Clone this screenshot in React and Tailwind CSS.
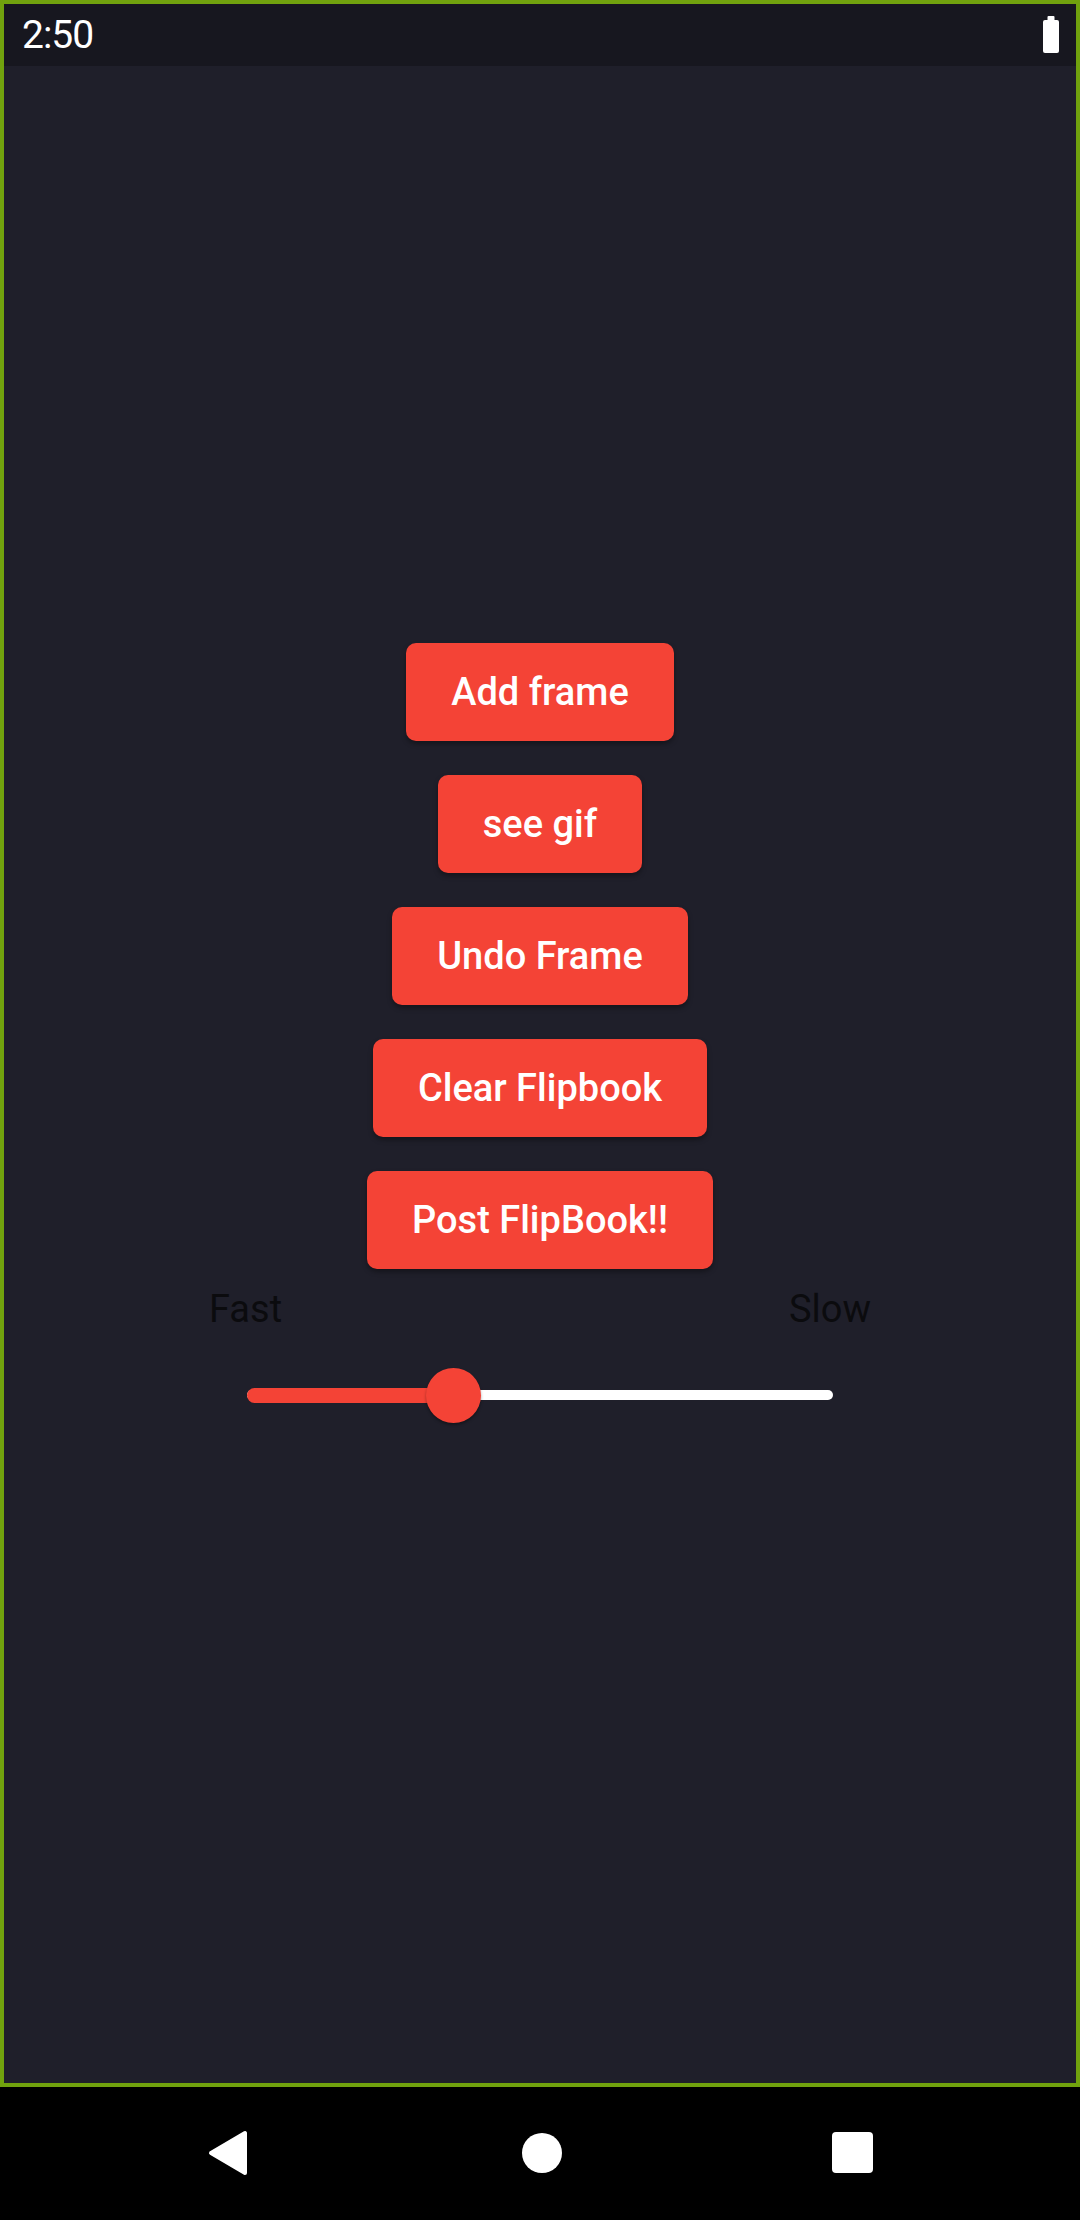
import React, { useState } from "react";

const BUTTONS = ["Add frame", "see gif", "Undo Frame", "Clear Flipbook", "Post FlipBook!!"];

export default function App() {
  const [speed] = useState(0.353);

  return (
    <div
      className="w-[1080px] h-[2220px] bg-black flex flex-col overflow-hidden"
      style={{ fontFamily: "Roboto, 'Noto Sans', sans-serif" }}
    >
      {/* --- APP FRAME --- */}
      <div className="h-[2087px] border-4 border-[#71a20e] bg-[#1f1f2a] flex flex-col">
        {/* Status bar */}
        <div className="h-[62px] bg-[#17171f] flex items-center justify-between pl-[18px] pr-[17px]">
          <span className="text-[39px] leading-none text-white tracking-[-1px]">2:50</span>
          <svg width="16" height="37" viewBox="0 0 16 37" className="mb-[1px]">
            <rect x="4.5" y="0" width="7" height="5" rx="1" fill="#fff" />
            <rect x="0" y="4" width="16" height="33" rx="2" fill="#fff" />
          </svg>
        </div>

        {/* Main column */}
        <div className="flex flex-col items-center pt-[577px]">
          <div className="flex flex-col items-center gap-[34px]">
            {BUTTONS.map((label) => (
              <button
                key={label}
                className="h-[98px] px-[45px] rounded-[10px] bg-[#f44336] text-white text-[38px] font-medium leading-none shadow-[0_3px_5px_rgba(0,0,0,0.35)]"
              >
                {label}
              </button>
            ))}
          </div>

          {/* Speed labels */}
          <div className="w-[662px] mt-[21px] flex justify-between text-[38px] leading-none text-[#0b0b0e]">
            <span>Fast</span>
            <span>Slow</span>
          </div>

          {/* Slider */}
          <div className="relative w-[586px] h-[56px] mt-[39px] flex items-center">
            <div className="w-full h-[10px] rounded-full bg-white" />
            <div
              className="absolute left-0 h-[15px] rounded-full bg-[#f44336]"
              style={{ width: `${speed * 100}%` }}
            />
            <div
              className="absolute w-[55px] h-[55px] rounded-full bg-[#f44336] shadow-[0_2px_3px_rgba(0,0,0,0.35)]"
              style={{ left: `calc(${speed * 100}% - 27.5px)` }}
            />
          </div>
        </div>
      </div>

      {/* --- NAV BAR --- */}
      <div className="flex-1 flex items-center justify-center pb-[2px]">
        <svg width="40" height="46" viewBox="0 0 40 46" className="mr-[274px]">
          <path d="M37 3 L37 43 L3 23 Z" fill="#fff" stroke="#fff" strokeWidth="4" strokeLinejoin="round" />
        </svg>
        <div className="w-[40px] h-[40px] rounded-full bg-white mr-[270px]" />
        <div className="w-[41px] h-[41px] rounded-[4px] bg-white" />
      </div>
    </div>
  );
}
